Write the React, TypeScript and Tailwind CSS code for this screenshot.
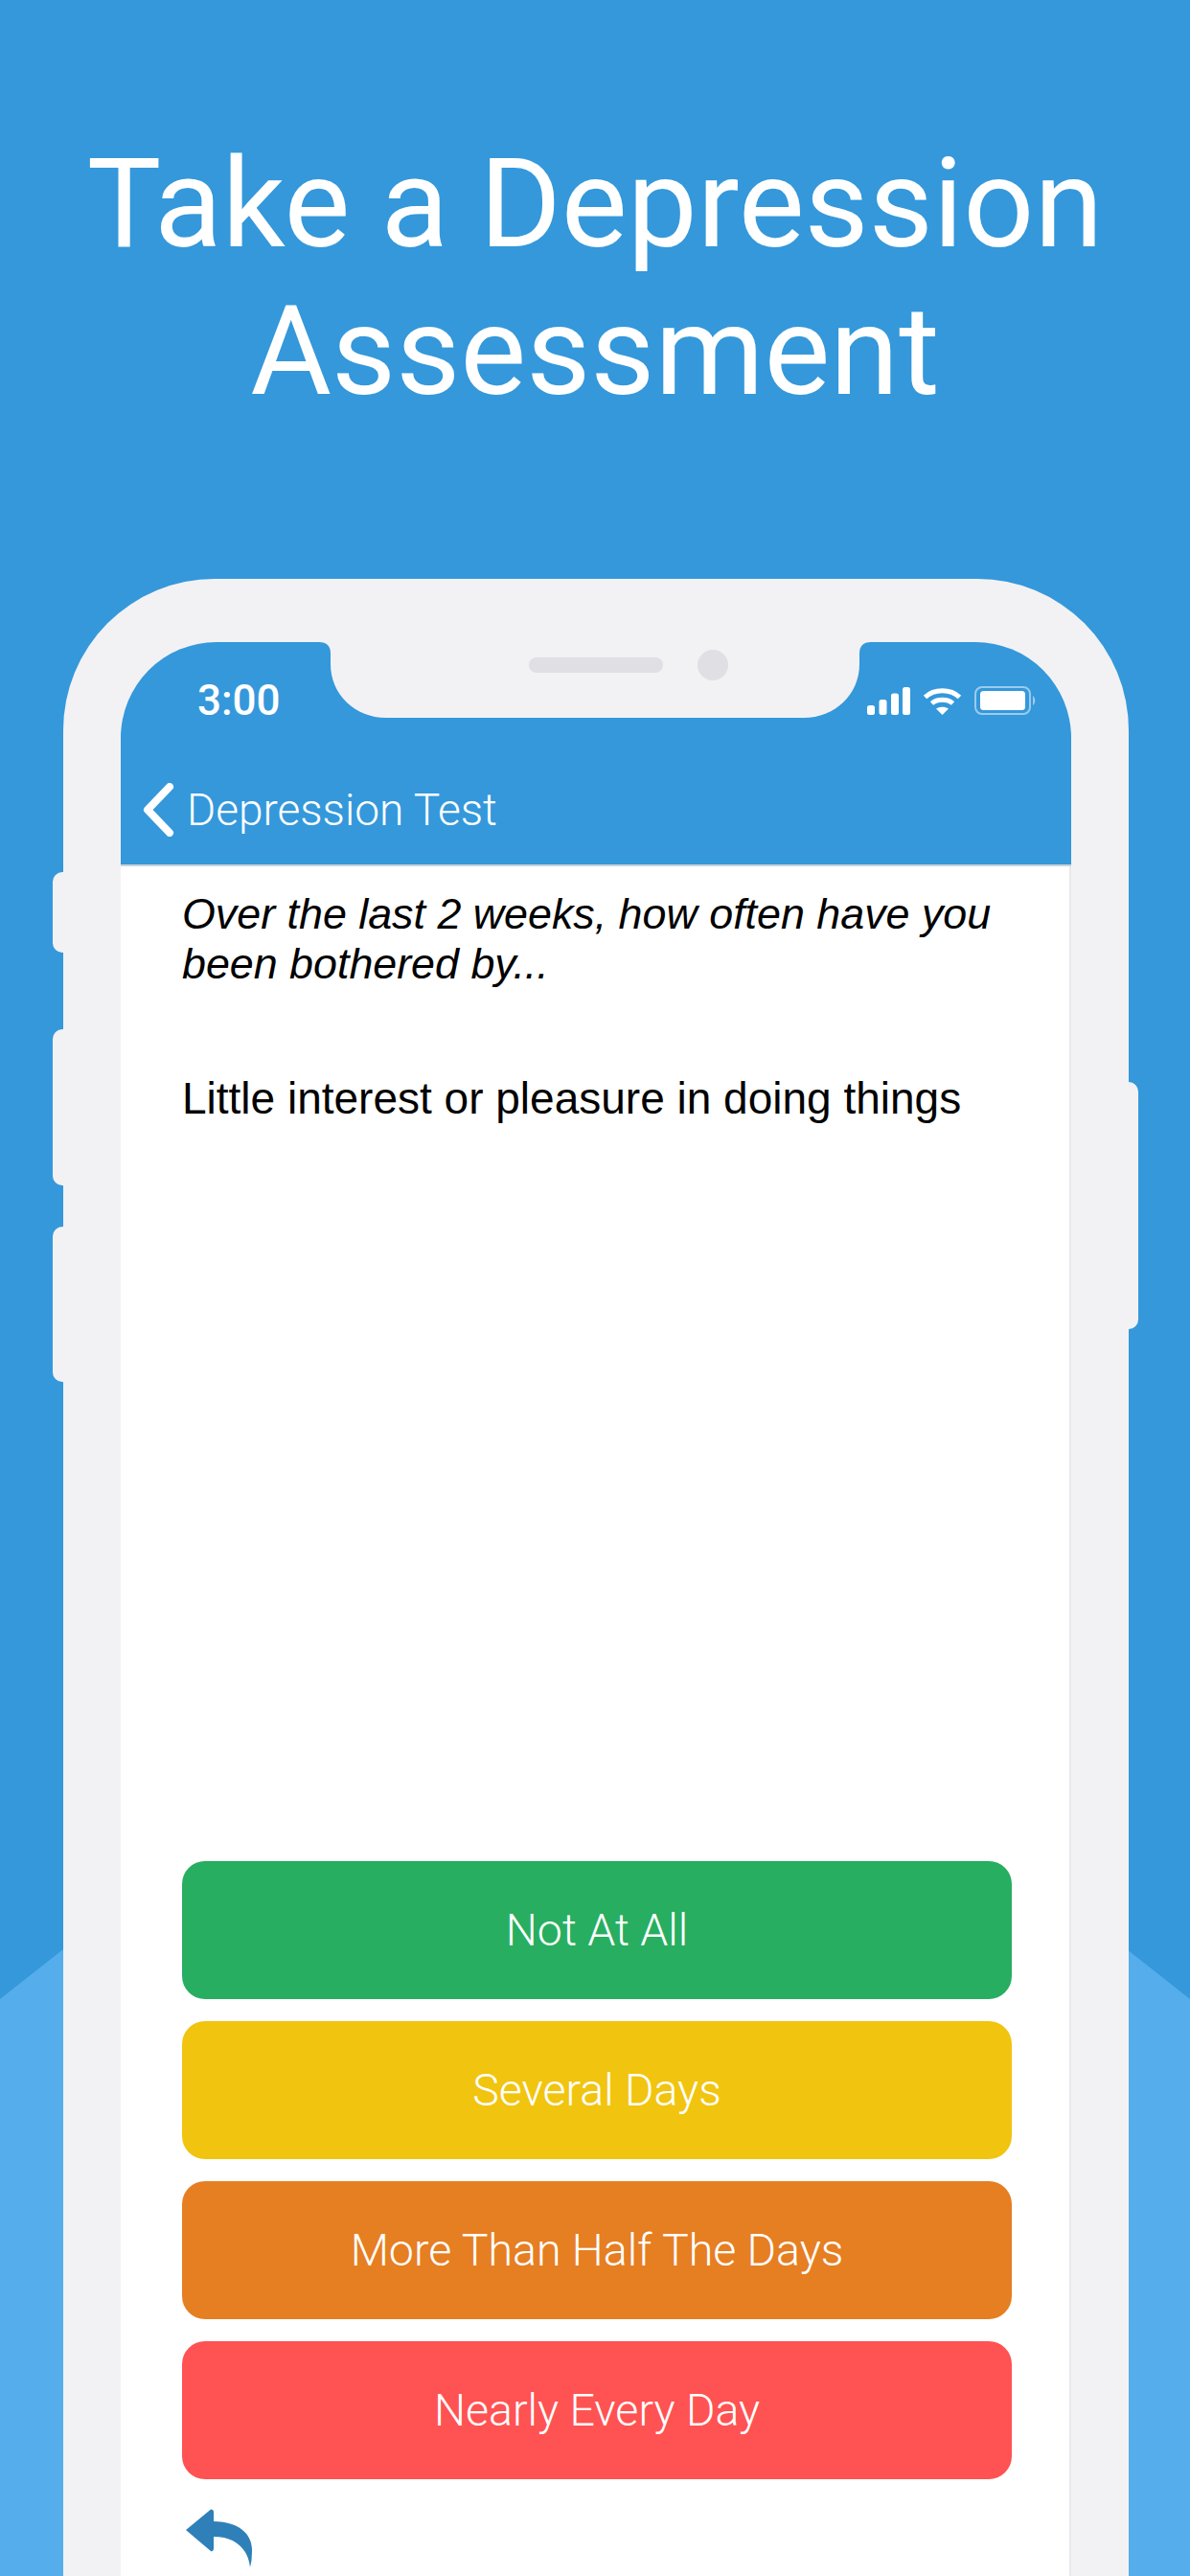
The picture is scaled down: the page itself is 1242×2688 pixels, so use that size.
const answers = [
  { label: "Not At All", color: "bg-[#27ae60]" },
  { label: "Several Days", color: "bg-[#f1c40f]" },
  { label: "More Than Half The Days", color: "bg-[#e67e22]" },
  { label: "Nearly Every Day", color: "bg-[#ff5252]" },
];

function Notch() {
  return (
    <svg className="absolute top-0 left-[207px]" width="576" height="79" viewBox="0 0 576 79">
      <path
        d="M0 0Q12 0 12 12V23C12 55 38 79 70 79H506C538 79 564 55 564 23V12Q564 0 576 0Z"
        fill="#f2f2f4"
      />
    </svg>
  );
}

function StatusIcons() {
  return (
    <div className="flex items-center gap-[13px]">
      <svg width="45" height="29" viewBox="0 0 45 29" fill="#fff">
        <rect x="0" y="19" width="8" height="10" rx="2.5" />
        <rect x="12.5" y="13" width="8" height="16" rx="2.5" />
        <rect x="25" y="6.5" width="8" height="22.5" rx="2.5" />
        <rect x="37" y="0" width="8" height="29" rx="2.5" />
      </svg>
      <svg width="41" height="29" viewBox="0 0 41 29" fill="none" stroke="#fff" strokeWidth="5">
        <path d="M2.5 10.5C12 1.5 29 1.5 38.5 10.5" />
        <path d="M9.5 17C15 12 26 12 31.5 17" />
        <path d="M20.5 29L14 22.5C17.5 20 23.5 20 27 22.5Z" fill="#fff" stroke="none" />
      </svg>
      <svg width="65" height="30" viewBox="0 0 65 30" fill="none">
        <rect x="1" y="1" width="57" height="28" rx="7" stroke="#9ccbed" strokeWidth="2" />
        <rect x="6" y="5" width="47" height="20" rx="3.5" fill="#fff" />
        <path d="M61 10C64 12 64 18 61 20Z" fill="#9ccbed" />
      </svg>
    </div>
  );
}

export default function App() {
  return (
    <div className="relative flex h-[2688px] w-[1242px] flex-col overflow-hidden bg-[#3498db] font-['Roboto',sans-serif]">
      {/* lighter hill behind the phone */}
      <svg className="absolute bottom-0 left-0" width="1242" height="654" viewBox="0 0 1242 654">
        <path d="M0 52L66 0H1176L1242 52V654H0Z" fill="#55adeb" />
      </svg>

      <h1 className="relative pt-[136px] text-center text-[130px] leading-[154px] font-normal text-white">
        Take a Depression
        <br />
        Assessment
      </h1>

      <div className="relative mt-[160px] ml-[66px] flex w-[1112px] flex-1 flex-col">
        {/* side buttons */}
        <div className="absolute top-[306px] left-[-11px] h-[84px] w-[20px] rounded-l-[10px] bg-[#f2f2f4]" />
        <div className="absolute top-[470px] left-[-11px] h-[163px] w-[20px] rounded-l-[10px] bg-[#f2f2f4]" />
        <div className="absolute top-[676px] left-[-11px] h-[162px] w-[20px] rounded-l-[10px] bg-[#f2f2f4]" />
        <div className="absolute top-[525px] right-[-10px] h-[258px] w-[20px] rounded-r-[10px] bg-[#f2f2f4]" />

        <div className="relative flex flex-1 flex-col rounded-tl-[158px] rounded-tr-[158px] bg-[#f2f2f4] px-[60px] pt-[66px]">
          <div className="relative flex flex-1 flex-col overflow-hidden rounded-tl-[100px] rounded-tr-[100px] bg-[#3498db]">
            <Notch />
            <div className="absolute top-[16px] left-[426px] h-[16px] w-[140px] rounded-full bg-[#dfdfe4]" />
            <div className="absolute top-[8px] left-[602px] h-[32px] w-[32px] rounded-full bg-[#dfdfe4]" />

            <div className="flex h-[122px] items-center justify-between pr-[36px] pl-[80px]">
              <span className="text-[44px] leading-[44px] font-medium text-white">3:00</span>
              <StatusIcons />
            </div>

            <div className="flex h-[112px] items-center gap-[13px] border-b-2 border-[#c9d3da] pb-[4px] pl-[23px]">
              <svg width="33" height="56" viewBox="0 0 33 56" fill="none">
                <path
                  d="M28 4L5 28L28 52"
                  stroke="#fff"
                  strokeWidth="8"
                  strokeLinecap="round"
                  strokeLinejoin="round"
                />
              </svg>
              <span className="text-[46px] leading-none font-light text-white">Depression Test</span>
            </div>

            <div className="flex flex-1 flex-col border-r-2 border-[#e9e9ed] bg-white pt-[23px] pr-[60px] pl-[64px] font-['Liberation_Sans',sans-serif] text-black">
              <p className="text-[44.8px] leading-[52px] italic">
                Over the last 2 weeks, how often have you been bothered by...
              </p>
              <p className="mt-[89px] text-[46px] leading-[52px]">
                Little interest or pleasure in doing things
              </p>

              <div className="mt-auto flex flex-col gap-[23px]">
                {answers.map((a) => (
                  <button
                    key={a.label}
                    className={`flex h-[144px] items-center justify-center rounded-[24px] pt-[2px] font-['Roboto',sans-serif] text-[46.5px] font-light text-white ${a.color}`}
                  >
                    {a.label}
                  </button>
                ))}
              </div>

              <svg className="mt-[31px] mb-[9px] ml-[4px]" width="70" height="61" viewBox="0 0 70 61">
                <path
                  d="M0 22L26 0.5Q29 0 29 3V13C52 13 70 24 69 45Q69 54 67 61C65 42 52 29 29 29V42Q28 45 26 44Z"
                  fill="#2f80b8"
                />
              </svg>
            </div>
          </div>
        </div>
      </div>
    </div>
  );
}
